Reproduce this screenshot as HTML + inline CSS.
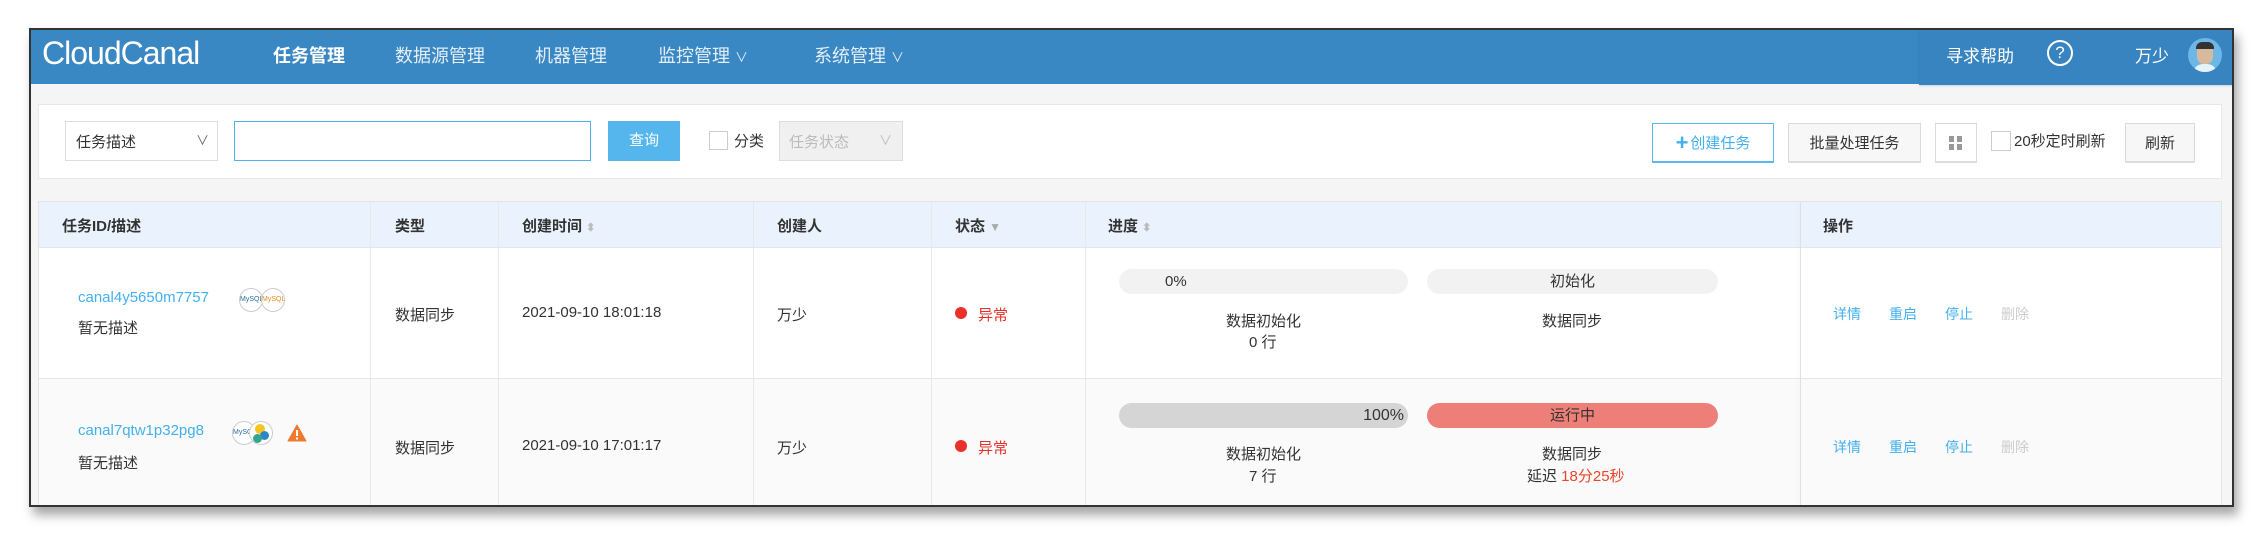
<!DOCTYPE html>
<html><head><meta charset="utf-8"><style>
*{margin:0;padding:0;box-sizing:border-box}
body{width:2266px;height:546px;background:#fff;position:relative;overflow:hidden;font-family:"Liberation Sans","Noto Sans CJK SC",sans-serif;font-size:15px;color:#333}
.a{position:absolute;white-space:nowrap}
#frame{position:absolute;left:29px;top:28px;width:2205px;height:479px;border:2px solid #333;background:#f5f5f5;overflow:hidden;box-shadow:4px 8px 10px rgba(0,0,0,.35)}
.nav{color:#fff;font-size:18px}
.btn{position:absolute;border:1px solid #d9d9d9;background:#f7f7f7;display:flex;align-items:center;justify-content:center;font-size:15px;color:#333;border-bottom:2px solid #ddd}
.pill{position:absolute;height:25px;border-radius:13px;background:#f2f2f2;font-size:15px;line-height:25px;text-align:center;color:#333}
.lnk{color:#43b0ee}
.vl{position:absolute;top:0;width:1px;background:#e8e8e8}
</style></head><body>
<div id="frame">
 <div class="a" style="left:0;top:0;width:2205px;height:54px;background:#3a88c3"></div>
 <div class="a" style="left:1888px;top:0;width:317px;height:55px;background:#3784c0;box-shadow:0 1px 2px rgba(0,0,0,.15)"></div>
 <div class="a" style="left:11px;top:5px;font-size:32px;color:#fff;letter-spacing:-1px">CloudCanal</div>
 <div class="a nav" style="left:242px;top:12px;font-weight:bold">任务管理</div>
 <div class="a nav" style="left:364px;top:12px;color:#e3eef8">数据源管理</div>
 <div class="a nav" style="left:504px;top:12px;color:#e3eef8">机器管理</div>
 <div class="a nav" style="left:627px;top:12px;color:#e3eef8">监控管理 <span style="font-size:13px">∨</span></div>
 <div class="a nav" style="left:783px;top:12px;color:#e3eef8">系统管理 <span style="font-size:13px">∨</span></div>
 <div class="a nav" style="left:1915px;top:12px;font-size:17px">寻求帮助</div>
 <div class="a" style="left:2016px;top:10px;width:26px;height:26px;border:2px solid #fff;border-radius:50%;color:#fff;font-size:17px;text-align:center;line-height:22px">?</div>
 <div class="a nav" style="left:2104px;top:12px;font-size:17px">万少</div>
 <div class="a" style="left:2157px;top:8px;width:34px;height:34px;border-radius:50%;background:#6db7e6;overflow:hidden">
  <div class="a" style="left:9px;top:6px;width:16px;height:20px;border-radius:7px;background:#d9b99b"></div>
  <div class="a" style="left:8px;top:4px;width:18px;height:7px;border-radius:6px 6px 0 0;background:#333"></div>
  <div class="a" style="left:5px;top:26px;width:24px;height:10px;border-radius:10px 10px 0 0;background:#e6f3fb"></div>
 </div>
 <div class="a" style="left:7px;top:74px;width:2184px;height:75px;background:#fff;border:1px solid #e8e8e8"></div>
 <div class="a" style="left:34px;top:91px;width:153px;height:40px;border:1px solid #ddd;background:#fff"></div>
 <div class="a" style="left:45px;top:101px;font-size:15px">任务描述</div>
 <div class="a" style="left:165px;top:100px;font-size:13px;color:#666">∨</div>
 <div class="a" style="left:203px;top:91px;width:357px;height:40px;border:1px solid #4db3f0;background:#fff"></div>
 <div class="a" style="left:577px;top:91px;width:72px;height:40px;background:#55b6ee;color:#fff;font-size:15px;text-align:center;line-height:40px">查询</div>
 <div class="a" style="left:678px;top:101px;width:19px;height:19px;border:1px solid #ccc;background:#fff"></div>
 <div class="a" style="left:703px;top:100px;font-size:15px">分类</div>
 <div class="a" style="left:748px;top:91px;width:124px;height:40px;border:1px solid #ddd;background:#f0f0f0"></div>
 <div class="a" style="left:758px;top:101px;font-size:15px;color:#bbb">任务状态</div>
 <div class="a" style="left:848px;top:100px;font-size:13px;color:#bbb">∨</div>
 <div class="btn" style="left:1621px;top:93px;width:122px;height:40px;border:1px solid #5bb8f0;border-bottom:2px solid #5bb8f0;background:#fff;color:#43b0ee"><b style="font-size:22px;margin-right:2px">+</b>创建任务</div>
 <div class="btn" style="left:1757px;top:93px;width:133px;height:40px">批量处理任务</div>
 <div class="btn" style="left:1904px;top:93px;width:42px;height:40px;background:#fff">
  <svg width="16" height="16"><rect x="1" y="1" width="5" height="6" fill="#999"/><rect x="9" y="1" width="5" height="6" fill="#999"/><rect x="1" y="9" width="5" height="6" fill="#999"/><rect x="9" y="9" width="5" height="6" fill="#999"/></svg></div>
 <div class="a" style="left:1960px;top:101px;width:20px;height:20px;border:1px solid #ccc;background:#fff"></div>
 <div class="a" style="left:1983px;top:100px;font-size:15px">20秒定时刷新</div>
 <div class="btn" style="left:2094px;top:93px;width:70px;height:40px">刷新</div>
 <div class="a" style="left:7px;top:171px;width:2184px;height:310px;background:#fff;border:1px solid #e3e3e3;overflow:hidden">
  <div class="a" style="left:0;top:0;width:2184px;height:46px;background:#eaf3fd;border-bottom:1px solid #e0e6ee"></div>
  <div class="a" style="left:0;top:176px;width:2184px;height:140px;background:#fafafa;border-top:1px solid #e6e6e6"></div>
  <div class="vl" style="left:331px;height:320px"></div>
  <div class="vl" style="left:459px;height:320px"></div>
  <div class="vl" style="left:714px;height:320px"></div>
  <div class="vl" style="left:892px;height:320px"></div>
  <div class="vl" style="left:1046px;height:320px"></div>
  <div class="vl" style="left:1761px;height:320px;background:#e0e0e0;box-shadow:-2px 0 3px rgba(0,0,0,.06)"></div>
  <div class="a" style="left:23px;top:13px;font-weight:bold">任务ID/描述</div>
  <div class="a" style="left:356px;top:13px;font-weight:bold">类型</div>
  <div class="a" style="left:483px;top:13px;font-weight:bold">创建时间 <span style="color:#bbb;font-size:11px">⬍</span></div>
  <div class="a" style="left:738px;top:13px;font-weight:bold">创建人</div>
  <div class="a" style="left:916px;top:13px;font-weight:bold">状态 <span style="color:#aaa;font-size:12px">▼</span></div>
  <div class="a" style="left:1069px;top:13px;font-weight:bold">进度 <span style="color:#bbb;font-size:11px">⬍</span></div>
  <div class="a" style="left:1784px;top:13px;font-weight:bold">操作</div>
  <!-- row1 -->
  <div class="a lnk" style="left:39px;top:87px">canal4y5650m7757</div>
  <div class="a" style="left:39px;top:115px">暂无描述</div>
  <div class="a" style="left:200px;top:86px;width:24px;height:24px;border:1px solid #ccc;border-radius:50%;font-size:7px;color:#2c6e9e;line-height:22px;text-align:center;background:#fff">MySQL</div>
  <div class="a" style="left:222px;top:86px;width:24px;height:24px;border:1px solid #ccc;border-radius:50%;font-size:7px;color:#e48d1a;line-height:22px;text-align:center;background:#fff">MySQL</div>
  <div class="a" style="left:356px;top:102px">数据同步</div>
  <div class="a" style="left:483px;top:102px">2021-09-10 18:01:18</div>
  <div class="a" style="left:738px;top:102px">万少</div>
  <div class="a" style="left:916px;top:105px;width:12px;height:12px;border-radius:50%;background:#e8312a"></div>
  <div class="a" style="left:939px;top:102px;color:#e8312a">异常</div>
  <div class="pill" style="left:1080px;top:67px;width:289px;text-align:left;padding-left:46px">0%</div>
  <div class="pill" style="left:1388px;top:67px;width:291px">初始化</div>
  <div class="a" style="left:1187px;top:108px">数据初始化</div>
  <div class="a" style="left:1210px;top:129px">0 行</div>
  <div class="a" style="left:1503px;top:108px">数据同步</div>
  <div class="a lnk" style="left:1794px;top:102px;font-size:14px">详情</div>
  <div class="a lnk" style="left:1850px;top:102px;font-size:14px">重启</div>
  <div class="a lnk" style="left:1906px;top:102px;font-size:14px">停止</div>
  <div class="a" style="left:1962px;top:102px;font-size:14px;color:#ccc">删除</div>
  <!-- row2 -->
  <div class="a lnk" style="left:39px;top:220px">canal7qtw1p32pg8</div>
  <div class="a" style="left:39px;top:250px">暂无描述</div>
  <div class="a" style="left:193px;top:219px;width:24px;height:24px;border:1px solid #ccc;border-radius:50%;font-size:7px;color:#2c6e9e;line-height:22px;text-align:center;background:#fff">MySQL</div>
  <div class="a" style="left:210px;top:219px;width:24px;height:24px;border:1px solid #ccc;border-radius:50%;background:#fff">
   <div class="a" style="left:5px;top:2px;width:10px;height:10px;border-radius:50%;background:#f4c51e"></div>
   <div class="a" style="left:10px;top:9px;width:9px;height:9px;border-radius:50%;background:#2a86c5"></div>
   <div class="a" style="left:3px;top:12px;width:9px;height:9px;border-radius:50%;background:#34a68c"></div></div>
  <svg class="a" style="left:248px;top:222px" width="20" height="18"><path d="M10 1 L19 17 L1 17 Z" fill="#ee7a2e" stroke="#ee7a2e" stroke-linejoin="round"/><rect x="9" y="6" width="2" height="6" fill="#fff"/><rect x="9" y="13.5" width="2" height="2" fill="#fff"/></svg>
  <div class="a" style="left:356px;top:235px">数据同步</div>
  <div class="a" style="left:483px;top:235px">2021-09-10 17:01:17</div>
  <div class="a" style="left:738px;top:235px">万少</div>
  <div class="a" style="left:916px;top:238px;width:12px;height:12px;border-radius:50%;background:#e8312a"></div>
  <div class="a" style="left:939px;top:235px;color:#e8312a">异常</div>
  <div class="pill" style="left:1080px;top:201px;width:289px;background:#d5d5d5;text-align:right;padding-right:4px;font-size:16px">100%</div>
  <div class="pill" style="left:1388px;top:201px;width:291px;background:#ee7e78">运行中</div>
  <div class="a" style="left:1187px;top:241px">数据初始化</div>
  <div class="a" style="left:1210px;top:263px">7 行</div>
  <div class="a" style="left:1503px;top:241px">数据同步</div>
  <div class="a" style="left:1488px;top:263px">延迟 <span style="color:#e8452a">18分25秒</span></div>
  <div class="a lnk" style="left:1794px;top:235px;font-size:14px">详情</div>
  <div class="a lnk" style="left:1850px;top:235px;font-size:14px">重启</div>
  <div class="a lnk" style="left:1906px;top:235px;font-size:14px">停止</div>
  <div class="a" style="left:1962px;top:235px;font-size:14px;color:#ccc">删除</div>
 </div>
</div>
</body></html>
